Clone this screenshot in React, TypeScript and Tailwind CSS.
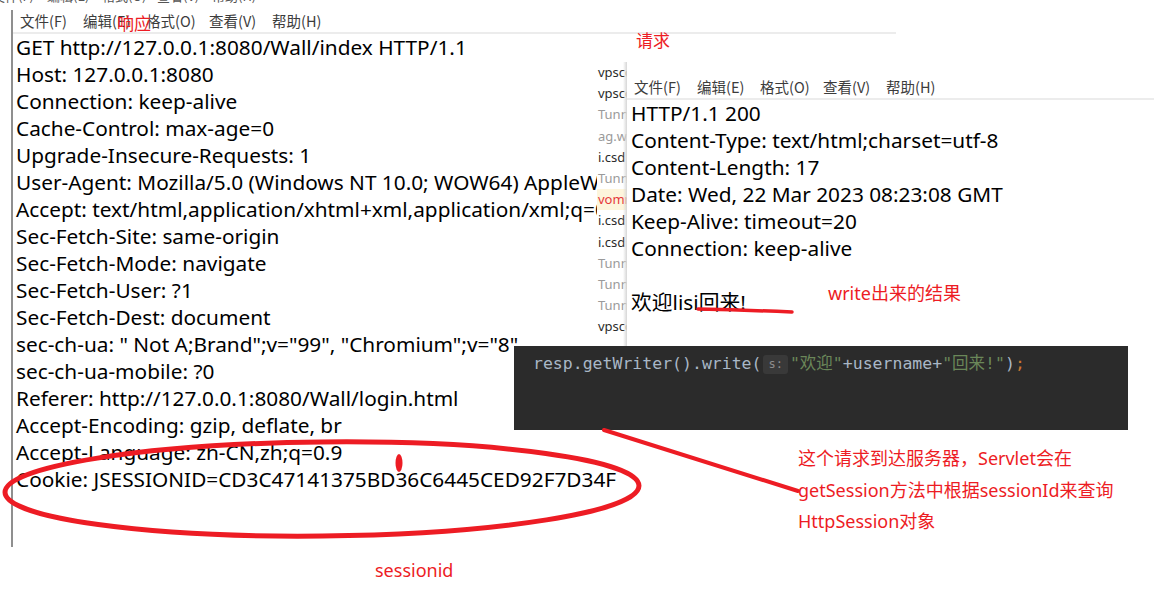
import React from "react";

const body = "font-['Noto_Sans','Noto_Sans_CJK_SC',sans-serif]";
const cjk = "font-['Noto_Sans_CJK_SC','Noto_Sans',sans-serif]";

const leftLines = [
  "GET http://127.0.0.1:8080/Wall/index HTTP/1.1",
  "Host: 127.0.0.1:8080",
  "Connection: keep-alive",
  "Cache-Control: max-age=0",
  "Upgrade-Insecure-Requests: 1",
  "User-Agent: Mozilla/5.0 (Windows NT 10.0; WOW64) AppleWebKit/537.36 (KHTML, like Gecko)",
  "Accept: text/html,application/xhtml+xml,application/xml;q=0.9,image/webp",
  "Sec-Fetch-Site: same-origin",
  "Sec-Fetch-Mode: navigate",
  "Sec-Fetch-User: ?1",
  "Sec-Fetch-Dest: document",
  'sec-ch-ua: " Not A;Brand";v="99", "Chromium";v="8"',
  "sec-ch-ua-mobile: ?0",
  "Referer: http://127.0.0.1:8080/Wall/login.html",
  "Accept-Encoding: gzip, deflate, br",
  "Accept-Language: zh-CN,zh;q=0.9",
  "Cookie: JSESSIONID=CD3C47141375BD36C6445CED92F7D34F",
];

const rightLines = [
  "HTTP/1.1 200",
  "Content-Type: text/html;charset=utf-8",
  "Content-Length: 17",
  "Date: Wed, 22 Mar 2023 08:23:08 GMT",
  "Keep-Alive: timeout=20",
  "Connection: keep-alive",
  "\u00a0",
  "欢迎lisi回来!",
];

const menu = ["文件(F)", "编辑(E)", "格式(O)", "查看(V)", "帮助(H)"];

const strip: { t: string; c: string; hl?: boolean }[] = [
  { t: "vpsco", c: "text-[#2b2b2b]" },
  { t: "vpsco", c: "text-[#2b2b2b]" },
  { t: "Tunn", c: "text-[#9a9a9a]" },
  { t: "ag.w", c: "text-[#9a9a9a]" },
  { t: "i.csd", c: "text-[#2b2b2b]" },
  { t: "Tunn", c: "text-[#9a9a9a]" },
  { t: "vomm", c: "text-[#e5383b]", hl: true },
  { t: "i.csd", c: "text-[#2b2b2b]" },
  { t: "i.csd", c: "text-[#2b2b2b]" },
  { t: "Tunn", c: "text-[#9a9a9a]" },
  { t: "Tunn", c: "text-[#9a9a9a]" },
  { t: "Tunn", c: "text-[#9a9a9a]" },
  { t: "vpsco", c: "text-[#2b2b2b]" },
  { t: "vpsco", c: "text-[#2b2b2b]" },
];

function Menu() {
  return (
    <div className={`flex h-[22px] items-center pl-[7px] text-[14.5px] text-[#3c3c3c] ${cjk}`}>
      {menu.map((m) => (
        <span key={m} className="w-[63px] shrink-0 whitespace-nowrap">
          {m}
        </span>
      ))}
    </div>
  );
}

function Notepad({ lines, pad }: { lines: string[]; pad: string }) {
  return (
    <>
      <Menu />
      <div className="h-[2px] bg-[#ececec]" />
      <div className={`${pad} text-[20.8px] leading-[27px] text-black whitespace-nowrap ${body}`}>
        {lines.map((l, i) => (
          <div key={i}>{l}</div>
        ))}
      </div>
    </>
  );
}

export default function App() {
  return (
    <div className="relative w-[1154px] h-[598px] overflow-hidden bg-white">
      {/* window behind, only its menu's lower edge is visible */}
      <div
        className={`absolute left-[-8px] top-[-12px] flex h-[16px] items-center text-[13px] text-[#555] ${cjk}`}
      >
        {menu.map((m) => (
          <span key={m} className="w-[55px] shrink-0 whitespace-nowrap">
            {m}
          </span>
        ))}
      </div>

      {/* left notepad window (request) */}
      <div className="absolute left-[11px] top-[10px] w-[885px] h-[537px] border-l-2 border-[#8f8f8f] overflow-hidden">
        <Notepad lines={leftLines} pad="pl-[3px]" />
      </div>

      {/* strip of a browser list between the windows */}
      <div className="absolute left-[597px] top-[62px] w-[30px] h-[284px] overflow-hidden bg-white">
        <div className={`flex flex-col text-[13px] leading-[21.2px] whitespace-nowrap ${body}`}>
          {strip.map((r, i) => (
            <div key={i} className={`pl-[1px] ${r.c} ${r.hl ? "bg-[#fdf5dc]" : ""}`}>
              {r.t}
            </div>
          ))}
        </div>
        <div className="absolute right-0 top-0 h-full w-[4px] bg-gradient-to-r from-transparent to-[#d6d6d6]" />
      </div>

      {/* right notepad window (response) */}
      <div className="absolute left-[627px] top-[76px] w-[527px] h-[268px] bg-white overflow-hidden">
        <Notepad lines={rightLines} pad="pl-[4px]" />
      </div>

      {/* code snippet */}
      <div className="absolute left-[514px] top-[346px] w-[614px] h-[84px] bg-[#2b2b2b] pl-[19px] pt-[7px]">
        <div
          className={`flex items-center h-[22px] text-[16.5px] whitespace-nowrap text-[#a9b7c6] font-['DejaVu_Sans_Mono','Noto_Sans_CJK_SC',monospace]`}
        >
          <span>resp.getWriter().write(</span>
          <span className="mx-[2px] rounded-[3px] bg-[#393939] px-[5px] text-[12px] leading-[19px] text-[#8c8c8c]">
            s:
          </span>
          <span className="text-[#6a8759]">"欢迎"</span>
          <span>+username+</span>
          <span className="text-[#6a8759]">"回来!"</span>
          <span>)</span>
          <span className="text-[#cc7832]">;</span>
        </div>
      </div>

      {/* red annotations */}
      <svg className="absolute left-0 top-0" width="1154" height="598" viewBox="0 0 1154 598">
        <line x1="604" y1="430" x2="798" y2="491" stroke="#ed1c24" strokeWidth="4" strokeLinecap="round" />
        <ellipse
          cx="322"
          cy="489"
          rx="317"
          ry="47"
          fill="none"
          stroke="#ed1c24"
          strokeWidth="5"
          transform="rotate(-0.6 322 489)"
        />
        <ellipse cx="399" cy="463" rx="3.5" ry="9" fill="#ed1c24" />
        <path d="M698 309 Q 745 310 792 312" fill="none" stroke="#ed1c24" strokeWidth="3.5" strokeLinecap="round" />
      </svg>

      <span className={`absolute left-[117px] top-[12px] text-[17px] leading-[22px] text-[#ed1c24] ${cjk}`}>响应</span>
      <span className={`absolute left-[636px] top-[29px] text-[17px] leading-[22px] text-[#ed1c24] ${cjk}`}>请求</span>
      <span className={`absolute left-[828px] top-[282px] text-[18px] leading-[22px] text-[#ed1c24] ${body}`}>
        write出来的结果
      </span>
      <div className={`absolute left-[798px] top-[443px] flex flex-col text-[18px] leading-[31.5px] text-[#ed1c24] ${body}`}>
        <span>这个请求到达服务器，Servlet会在</span>
        <span>getSession方法中根据sessionId来查询</span>
        <span>HttpSession对象</span>
      </div>
      <span className={`absolute left-[375px] top-[558px] text-[18px] leading-[24px] text-[#ed1c24] ${body}`}>
        sessionid
      </span>
    </div>
  );
}
